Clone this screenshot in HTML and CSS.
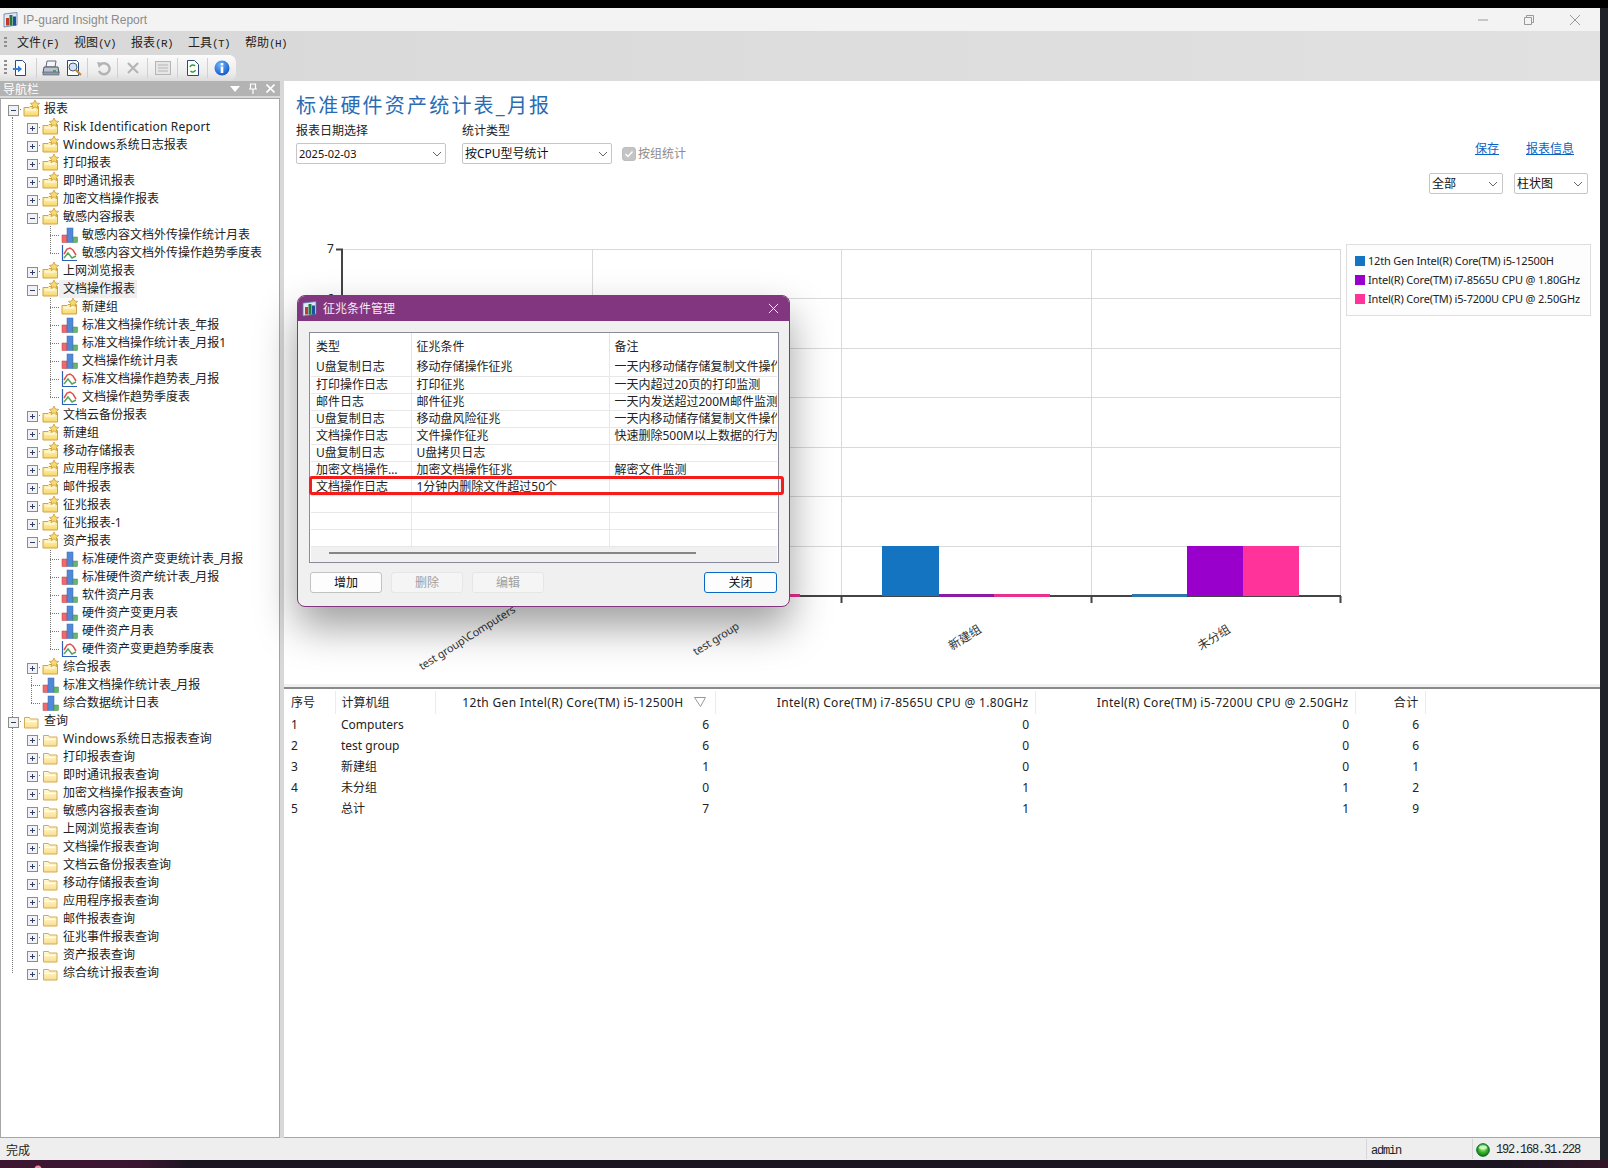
FILE: index.html
```html
<!DOCTYPE html>
<html lang="zh-CN">
<head>
<meta charset="utf-8">
<title>IP-guard Insight Report</title>
<link rel="stylesheet" href="styles.css">
</head>
<body>
<svg class="defs" xmlns="http://www.w3.org/2000/svg">
  <defs>
    <linearGradient id="gold" x1="0" y1="0" x2="0" y2="1"><stop offset="0" stop-color="#fff6c4"/><stop offset="1" stop-color="#f8d766"/></linearGradient>
    <linearGradient id="pale" x1="0" y1="0" x2="0" y2="1"><stop offset="0" stop-color="#fffbe2"/><stop offset="1" stop-color="#f9dd8a"/></linearGradient>
    <radialGradient id="led" cx=".5" cy=".35" r=".7"><stop offset="0" stop-color="#b6f59a"/><stop offset=".6" stop-color="#2aa51f"/><stop offset="1" stop-color="#0b6b0b"/></radialGradient>
    <radialGradient id="info" cx=".4" cy=".3" r=".8"><stop offset="0" stop-color="#6fb6ff"/><stop offset="1" stop-color="#0a4fc0"/></radialGradient>
    <symbol id="fs" viewBox="0 0 17 18">
      <path d="M1 7.500h5l1-1h8.500v9.500H1z" fill="url(#gold)" stroke="#d0a24a"/>
      <path d="M3 9.500h10v1H3z" fill="#fff"/>
      <path d="M12 0l1.500 3 3.200.4-2.400 2.100.7 3.100-3-1.700-3 1.700.7-3.100-2.400-2.100 3.200-.4z" fill="#f7da72" stroke="#bd9236" stroke-width=".7"/>
    </symbol>
    <symbol id="fp" viewBox="0 0 17 18">
      <path d="M1.500 5.500h5l1 1.500h7.500v9H1.500z" fill="url(#pale)" stroke="#d3aa55"/>
      <path d="M3 9h10v1H3z" fill="#fff"/>
    </symbol>
    <symbol id="bar" viewBox="0 0 17 18">
      <rect x="1" y="9" width="5" height="7.500" fill="#ef6a6c" stroke="#bb4144" stroke-width=".5"/>
      <rect x="6" y="2" width="6" height="14.500" fill="#5288d8" stroke="#3a68ad" stroke-width=".5"/>
      <rect x="12" y="11" width="4.500" height="5.500" fill="#68b56c" stroke="#3f8a45" stroke-width=".5"/>
    </symbol>
    <symbol id="line" viewBox="0 0 17 18">
      <path d="M1.500 1v15.500H16" fill="none" stroke="#2c5fb5" stroke-width="1.200"/>
      <path d="M3 10l3-5 3-1 3 2 3 5" fill="none" stroke="#e2504f" stroke-width="1.500"/>
      <path d="M3 14l4-5 4 5 4-2" fill="none" stroke="#55a65a" stroke-width="1.500"/>
    </symbol>
    <symbol id="app" viewBox="0 0 16 16">
      <path d="M1 2l13-1.500V13L1 15z" fill="#dfe8f5" stroke="#5a7aa8" stroke-width=".8"/>
      <rect x="3" y="6" width="3" height="7.500" fill="#c0392b"/>
      <rect x="6.500" y="3" width="3" height="10.500" fill="#1f7a3c"/>
      <rect x="10" y="4.500" width="3" height="9" fill="#1d4f9e"/>
    </symbol>
  </defs>
</svg>

<div class="screen">
  <div class="top-edge"></div>
  <div class="middle">
    <div class="window">
      <header class="titlebar">
        <svg class="app-icon"><use href="#app"/></svg>
        <span class="app-name">IP-guard Insight Report</span>
        <div class="winctl">
          <svg width="12" height="12" viewBox="0 0 12 12"><path d="M1 6h10" stroke="#999"/></svg>
          <svg width="12" height="12" viewBox="0 0 12 12"><path d="M1.500 3.500h7v7h-7zM3.500 3.500v-2h7v7h-2" fill="none" stroke="#999"/></svg>
          <svg width="12" height="12" viewBox="0 0 12 12"><path d="M1 1l10 10M11 1L1 11" stroke="#999"/></svg>
        </div>
      </header>
      <nav class="menubar">
        <i class="grip"></i>
        <span class="menu-item">文件<b>(F)</b></span>
        <span class="menu-item">视图<b>(V)</b></span>
        <span class="menu-item">报表<b>(R)</b></span>
        <span class="menu-item">工具<b>(T)</b></span>
        <span class="menu-item">帮助<b>(H)</b></span>
      </nav>
      <div class="toolband">
        <div class="toolbar">
          <i class="grip"></i>
          <div class="tool first">
            <svg width="16" height="18" viewBox="0 0 16 18"><path d="M3.500 1.500h7l3 3v12h-10z" fill="#fff" stroke="#2b4a78"/><path d="M1 9h5V6.500L10 10l-4 3.500V11H1z" fill="#2f7fd8"/></svg>
          </div>
          <div class="tool double">
            <svg width="18" height="18" viewBox="0 0 18 18"><path d="M5 2h9l-1 6H4z" fill="#f4f6fa" stroke="#667"/><path d="M2 8h14l1 6H1z" fill="#b8c2d0" stroke="#556"/><rect x="1" y="13" width="16" height="3" fill="#8f9aab" stroke="#556" stroke-width=".6"/><rect x="11" y="11" width="3" height="2" fill="#18c02c"/></svg>
            <svg width="18" height="18" viewBox="0 0 18 18"><path d="M2.500 1.500h9l2 2v13h-11z" fill="#fff" stroke="#2b4a78"/><circle cx="8" cy="8" r="4" fill="#cfe4fb" stroke="#556"/><path d="M11 11l5 5" stroke="#c98a2b" stroke-width="2.200"/></svg>
          </div>
          <div class="tool">
            <svg width="16" height="16" viewBox="0 0 16 16"><path d="M5 5a5.500 5.500 0 1 1-1 6" fill="none" stroke="#b3b3b3" stroke-width="2.500"/><path d="M2 2l6 1-4 5z" fill="#b3b3b3"/></svg>
          </div>
          <div class="tool">
            <svg width="14" height="14" viewBox="0 0 14 14"><path d="M2 2l10 10M12 2L2 12" stroke="#b5b5b5" stroke-width="2.200"/></svg>
          </div>
          <div class="tool">
            <svg width="16" height="14" viewBox="0 0 16 14"><rect x=".5" y=".5" width="15" height="13" fill="#e6e6e6" stroke="#b5b5b5"/><path d="M3 4h10M3 7h10M3 10h10" stroke="#b5b5b5"/></svg>
          </div>
          <div class="tool">
            <svg width="14" height="18" viewBox="0 0 14 18"><path d="M1.500 1.500h7l4 4v11h-11z" fill="#fff" stroke="#2b4a78"/><path d="M4 8a3 3 0 0 1 5-1M9.500 11a3 3 0 0 1-5 1" fill="none" stroke="#2fa32f" stroke-width="1.500"/></svg>
          </div>
          <div class="tool last">
            <svg width="16" height="16" viewBox="0 0 16 16"><circle cx="8" cy="8" r="7.500" fill="url(#info)"/><rect x="6.700" y="3" width="2.600" height="2.400" fill="#fff"/><rect x="6.700" y="6.500" width="2.600" height="6.500" fill="#fff"/></svg>
          </div>
        </div>
      </div>

      <div class="workspace">
        <aside class="nav">
          <div class="nav-head">
            <span class="nav-title">导航栏</span>
            <div class="nav-ctl">
              <svg width="10" height="6" viewBox="0 0 10 6"><path d="M0 0h10L5 6z" fill="#fff"/></svg>
              <svg width="10" height="11" viewBox="0 0 10 11"><path d="M2.500 1h5v5h-5zM1 6h8M5 6v5" fill="none" stroke="#fff" stroke-width="1.200"/></svg>
              <svg width="9" height="9" viewBox="0 0 9 9"><path d="M.5.500l8 8M8.500.500l-8 8" stroke="#fff" stroke-width="1.600"/></svg>
            </div>
          </div>
          <div class="tree">
            <div class="row"><i class="g h rb m"></i><svg class="ic"><use href="#fs"/></svg><span>报表</span></div>
            <div class="row"><i class="g v"></i><i class="g h p"></i><svg class="ic"><use href="#fs"/></svg><span class="lat">Risk Identification Report</span></div>
            <div class="row"><i class="g v"></i><i class="g h p"></i><svg class="ic"><use href="#fs"/></svg><span><b class="lat">Windows</b>系统日志报表</span></div>
            <div class="row"><i class="g v"></i><i class="g h p"></i><svg class="ic"><use href="#fs"/></svg><span>打印报表</span></div>
            <div class="row"><i class="g v"></i><i class="g h p"></i><svg class="ic"><use href="#fs"/></svg><span>即时通讯报表</span></div>
            <div class="row"><i class="g v"></i><i class="g h p"></i><svg class="ic"><use href="#fs"/></svg><span>加密文档操作报表</span></div>
            <div class="row"><i class="g v"></i><i class="g h m"></i><svg class="ic"><use href="#fs"/></svg><span>敏感内容报表</span></div>
            <div class="row"><i class="g v"></i><i class="g"></i><i class="g t"></i><svg class="ic"><use href="#bar"/></svg><span>敏感内容文档外传操作统计月表</span></div>
            <div class="row"><i class="g v"></i><i class="g"></i><i class="g l"></i><svg class="ic"><use href="#line"/></svg><span>敏感内容文档外传操作趋势季度表</span></div>
            <div class="row"><i class="g v"></i><i class="g h p"></i><svg class="ic"><use href="#fs"/></svg><span>上网浏览报表</span></div>
            <div class="row"><i class="g v"></i><i class="g h m"></i><svg class="ic"><use href="#fs"/></svg><span class="picked">文档操作报表</span></div>
            <div class="row"><i class="g v"></i><i class="g"></i><i class="g t"></i><svg class="ic"><use href="#fs"/></svg><span>新建组</span></div>
            <div class="row"><i class="g v"></i><i class="g"></i><i class="g t"></i><svg class="ic"><use href="#bar"/></svg><span>标准文档操作统计表_年报</span></div>
            <div class="row"><i class="g v"></i><i class="g"></i><i class="g t"></i><svg class="ic"><use href="#bar"/></svg><span>标准文档操作统计表_月报1</span></div>
            <div class="row"><i class="g v"></i><i class="g"></i><i class="g t"></i><svg class="ic"><use href="#bar"/></svg><span>文档操作统计月表</span></div>
            <div class="row"><i class="g v"></i><i class="g"></i><i class="g t"></i><svg class="ic"><use href="#line"/></svg><span>标准文档操作趋势表_月报</span></div>
            <div class="row"><i class="g v"></i><i class="g"></i><i class="g l"></i><svg class="ic"><use href="#line"/></svg><span>文档操作趋势季度表</span></div>
            <div class="row"><i class="g v"></i><i class="g h p"></i><svg class="ic"><use href="#fs"/></svg><span>文档云备份报表</span></div>
            <div class="row"><i class="g v"></i><i class="g h p"></i><svg class="ic"><use href="#fs"/></svg><span>新建组</span></div>
            <div class="row"><i class="g v"></i><i class="g h p"></i><svg class="ic"><use href="#fs"/></svg><span>移动存储报表</span></div>
            <div class="row"><i class="g v"></i><i class="g h p"></i><svg class="ic"><use href="#fs"/></svg><span>应用程序报表</span></div>
            <div class="row"><i class="g v"></i><i class="g h p"></i><svg class="ic"><use href="#fs"/></svg><span>邮件报表</span></div>
            <div class="row"><i class="g v"></i><i class="g h p"></i><svg class="ic"><use href="#fs"/></svg><span>征兆报表</span></div>
            <div class="row"><i class="g v"></i><i class="g h p"></i><svg class="ic"><use href="#fs"/></svg><span>征兆报表-1</span></div>
            <div class="row"><i class="g v"></i><i class="g h m"></i><svg class="ic"><use href="#fs"/></svg><span>资产报表</span></div>
            <div class="row"><i class="g v"></i><i class="g"></i><i class="g t"></i><svg class="ic"><use href="#bar"/></svg><span>标准硬件资产变更统计表_月报</span></div>
            <div class="row"><i class="g v"></i><i class="g"></i><i class="g t"></i><svg class="ic"><use href="#bar"/></svg><span>标准硬件资产统计表_月报</span></div>
            <div class="row"><i class="g v"></i><i class="g"></i><i class="g t"></i><svg class="ic"><use href="#bar"/></svg><span>软件资产月表</span></div>
            <div class="row"><i class="g v"></i><i class="g"></i><i class="g t"></i><svg class="ic"><use href="#bar"/></svg><span>硬件资产变更月表</span></div>
            <div class="row"><i class="g v"></i><i class="g"></i><i class="g t"></i><svg class="ic"><use href="#bar"/></svg><span>硬件资产月表</span></div>
            <div class="row"><i class="g v"></i><i class="g"></i><i class="g l"></i><svg class="ic"><use href="#line"/></svg><span>硬件资产变更趋势季度表</span></div>
            <div class="row"><i class="g v"></i><i class="g h p"></i><svg class="ic"><use href="#fs"/></svg><span>综合报表</span></div>
            <div class="row"><i class="g v"></i><i class="g t"></i><svg class="ic"><use href="#bar"/></svg><span>标准文档操作统计表_月报</span></div>
            <div class="row"><i class="g v"></i><i class="g l"></i><svg class="ic"><use href="#bar"/></svg><span>综合数据统计日表</span></div>
            <div class="row"><i class="g t m"></i><svg class="ic"><use href="#fp"/></svg><span>查询</span></div>
            <div class="row"><i class="g v"></i><i class="g h p"></i><svg class="ic"><use href="#fp"/></svg><span><b class="lat">Windows</b>系统日志报表查询</span></div>
            <div class="row"><i class="g v"></i><i class="g h p"></i><svg class="ic"><use href="#fp"/></svg><span>打印报表查询</span></div>
            <div class="row"><i class="g v"></i><i class="g h p"></i><svg class="ic"><use href="#fp"/></svg><span>即时通讯报表查询</span></div>
            <div class="row"><i class="g v"></i><i class="g h p"></i><svg class="ic"><use href="#fp"/></svg><span>加密文档操作报表查询</span></div>
            <div class="row"><i class="g v"></i><i class="g h p"></i><svg class="ic"><use href="#fp"/></svg><span>敏感内容报表查询</span></div>
            <div class="row"><i class="g v"></i><i class="g h p"></i><svg class="ic"><use href="#fp"/></svg><span>上网浏览报表查询</span></div>
            <div class="row"><i class="g v"></i><i class="g h p"></i><svg class="ic"><use href="#fp"/></svg><span>文档操作报表查询</span></div>
            <div class="row"><i class="g v"></i><i class="g h p"></i><svg class="ic"><use href="#fp"/></svg><span>文档云备份报表查询</span></div>
            <div class="row"><i class="g v"></i><i class="g h p"></i><svg class="ic"><use href="#fp"/></svg><span>移动存储报表查询</span></div>
            <div class="row"><i class="g v"></i><i class="g h p"></i><svg class="ic"><use href="#fp"/></svg><span>应用程序报表查询</span></div>
            <div class="row"><i class="g v"></i><i class="g h p"></i><svg class="ic"><use href="#fp"/></svg><span>邮件报表查询</span></div>
            <div class="row"><i class="g v"></i><i class="g h p"></i><svg class="ic"><use href="#fp"/></svg><span>征兆事件报表查询</span></div>
            <div class="row"><i class="g v"></i><i class="g h p"></i><svg class="ic"><use href="#fp"/></svg><span>资产报表查询</span></div>
            <div class="row"><i class="g vh"></i><i class="g h p"></i><svg class="ic"><use href="#fp"/></svg><span>综合统计报表查询</span></div>
          </div>
        </aside>

        <main class="report">
          <section class="report-head">
            <div class="filters">
              <h1 class="report-title">标准硬件资产统计表_月报</h1>
              <div class="filter-row">
                <div class="field">
                  <label class="field-label">报表日期选择</label>
                  <div class="select wide"><span class="date">2025-02-03</span><svg class="chev" viewBox="0 0 10 6"><path d="M1 1l4 4 4-4" fill="none" stroke="#666"/></svg></div>
                </div>
                <div class="field">
                  <label class="field-label">统计类型</label>
                  <div class="select wide"><span>按CPU型号统计</span><svg class="chev" viewBox="0 0 10 6"><path d="M1 1l4 4 4-4" fill="none" stroke="#666"/></svg></div>
                </div>
                <div class="checkline">
                  <svg width="14" height="14" viewBox="0 0 14 14"><rect width="13" height="13" x=".5" y=".5" rx="2.500" fill="#c4c4c4" stroke="#bdbdbd"/><path d="M3.500 7l2.500 2.500 4.500-5" fill="none" stroke="#fff" stroke-width="1.400"/></svg>
                  <span>按组统计</span>
                </div>
              </div>
            </div>
            <div class="head-right">
              <div class="links"><a class="link">保存</a><a class="link">报表信息</a></div>
              <div class="view-selects">
                <div class="select narrow"><span>全部</span><svg class="chev" viewBox="0 0 10 6"><path d="M1 1l4 4 4-4" fill="none" stroke="#666"/></svg></div>
                <div class="select narrow"><span>柱状图</span><svg class="chev" viewBox="0 0 10 6"><path d="M1 1l4 4 4-4" fill="none" stroke="#666"/></svg></div>
              </div>
            </div>
          </section>

          <section class="chart-row">
            <svg class="chart" viewBox="284 235 1062 452" width="1062" height="452">
              <g stroke="#d9d9d9" stroke-width="1">
                <path d="M342 249.500H1340M342 298.500H1340M342 348.500H1340M342 397.500H1340M342 447.500H1340M342 496.500H1340M342 546.500H1340"/>
                <path d="M592.500 249V596M841.500 249V596M1091.500 249V596M1340.500 249V596"/>
              </g>
              <path d="M336 249.500h6V596H1341M342 596v7M592.500 596v7M841.500 596v7M1091.500 596v7M1340.500 596v7" fill="none" stroke="#444" stroke-width="2"/>
              <rect x="383" y="299" width="56" height="297" fill="#1474c2"/>
              <rect x="633" y="299" width="56" height="297" fill="#1474c2"/>
              <rect x="689" y="594" width="55" height="3" fill="#8a1aa8"/>
              <rect x="744" y="594" width="56" height="3" fill="#e8308f"/>
              <rect x="882" y="546" width="57" height="50" fill="#1474c2"/>
              <rect x="939" y="594" width="55" height="3" fill="#8a1aa8"/>
              <rect x="994" y="594" width="56" height="3" fill="#e8308f"/>
              <rect x="1132" y="594" width="55" height="3" fill="#2f76ab"/>
              <rect x="1187" y="546" width="56" height="50" fill="#9900cc"/>
              <rect x="1243" y="546" width="56" height="50" fill="#ff3399"/>
              <text class="tick" x="327" y="253">7</text>
              <text class="tick" x="327" y="303">6</text>
              <text class="xlabel lat-label" transform="translate(469 641) rotate(-32)">test group\Computers</text>
              <text class="xlabel lat-label" transform="translate(718 642) rotate(-32)">test group</text>
              <text class="xlabel" transform="translate(967 641) rotate(-32)">新建组</text>
              <text class="xlabel" transform="translate(1216 641) rotate(-32)">未分组</text>
            </svg>
            <div class="legend">
              <div class="legend-item"><i class="sw sw-blue"></i>12th Gen Intel(R) Core(TM) i5-12500H</div>
              <div class="legend-item"><i class="sw sw-purple"></i>Intel(R) Core(TM) i7-8565U CPU @ 1.80GHz</div>
              <div class="legend-item"><i class="sw sw-pink"></i>Intel(R) Core(TM) i5-7200U CPU @ 2.50GHz</div>
            </div>
          </section>

          <section class="data">
            <table class="grid">
              <colgroup><col class="c1"><col class="c2"><col class="c3"><col class="c4"><col class="c4"><col class="c5"></colgroup>
              <thead>
                <tr><th>序号</th><th>计算机组</th><th class="num sorted">12th Gen Intel(R) Core(TM) i5-12500H<svg class="sort" viewBox="0 0 12 10"><path d="M.5.500h11L6.500 9.500z" fill="none" stroke="#999"/></svg></th><th class="num">Intel(R) Core(TM) i7-8565U CPU @ 1.80GHz</th><th class="num">Intel(R) Core(TM) i5-7200U CPU @ 2.50GHz</th><th class="num">合计</th></tr>
              </thead>
              <tbody>
                <tr><td>1</td><td>Computers</td><td class="num">6</td><td class="num">0</td><td class="num">0</td><td class="num">6</td></tr>
                <tr><td>2</td><td>test group</td><td class="num">6</td><td class="num">0</td><td class="num">0</td><td class="num">6</td></tr>
                <tr><td>3</td><td>新建组</td><td class="num">1</td><td class="num">0</td><td class="num">0</td><td class="num">1</td></tr>
                <tr><td>4</td><td>未分组</td><td class="num">0</td><td class="num">1</td><td class="num">1</td><td class="num">2</td></tr>
                <tr><td>5</td><td>总计</td><td class="num">7</td><td class="num">1</td><td class="num">1</td><td class="num">9</td></tr>
              </tbody>
            </table>
          </section>
        </main>
      </div>

      <footer class="statusbar">
        <span class="status-main">完成</span>
        <span class="status-user">admin</span>
        <span class="status-ip">
          <svg width="14" height="14" viewBox="0 0 14 14"><circle cx="7" cy="7" r="6.300" fill="url(#led)" stroke="#063" stroke-width="1"/><ellipse cx="7" cy="4.500" rx="4" ry="2" fill="#d8ffc8" opacity=".8"/></svg>
          192.168.31.228
        </span>
      </footer>
    </div>
    <div class="right-edge"></div>
  </div>
  <div class="bottom-edge"></div>
</div>

<div class="dialog">
  <div class="dialog-title">
    <svg class="dialog-icon"><use href="#app"/></svg>
    <span>征兆条件管理</span>
    <svg class="dialog-close" viewBox="0 0 12 12"><path d="M1 1l10 10M11 1L1 11" stroke="#fff" stroke-width="1"/></svg>
  </div>
  <div class="dialog-body">
    <div class="listbox">
      <table class="list">
        <colgroup><col class="l1"><col class="l2"><col class="l3"></colgroup>
        <thead><tr><th>类型</th><th>征兆条件</th><th>备注</th></tr></thead>
        <tbody>
          <tr><td>U盘复制日志</td><td>移动存储操作征兆</td><td>一天内移动储存储复制文件操作超过100个</td></tr>
          <tr><td>打印操作日志</td><td>打印征兆</td><td>一天内超过20页的打印监测</td></tr>
          <tr><td>邮件日志</td><td>邮件征兆</td><td>一天内发送超过200M邮件监测</td></tr>
          <tr><td>U盘复制日志</td><td>移动盘风险征兆</td><td>一天内移动储存储复制文件操作超过100个</td></tr>
          <tr><td>文档操作日志</td><td>文件操作征兆</td><td>快速删除500M以上数据的行为监测</td></tr>
          <tr><td>U盘复制日志</td><td>U盘拷贝日志</td><td></td></tr>
          <tr><td>加密文档操作日志</td><td>加密文档操作征兆</td><td>解密文件监测</td></tr>
          <tr><td>文档操作日志</td><td>1分钟内删除文件超过50个</td><td></td></tr>
          <tr><td></td><td></td><td></td></tr>
          <tr><td></td><td></td><td></td></tr>
          <tr><td></td><td></td><td></td></tr>
        </tbody>
      </table>
      <div class="hscroll"><i class="thumb"></i></div>
    </div>
    <div class="dialog-actions">
      <button class="btn">增加</button>
      <button class="btn off">删除</button>
      <button class="btn off">编辑</button>
      <button class="btn primary">关闭</button>
    </div>
  </div>
  <div class="highlight"></div>
</div>
</body>
</html>
```
FILE: styles.css
```css
* { box-sizing: border-box; }
html, body { margin: 0; padding: 0; }
body {
  width: 1608px;
  height: 1168px;
  overflow: hidden;
  position: relative;
  background: #000;
  font: 12px/16px "Noto Sans", "Noto Sans CJK SC", sans-serif;
  color: #1c1c1c;
}
.defs { display: block; width: 0; height: 0; }

.screen { display: flex; flex-direction: column; height: 1168px; }
.top-edge { height: 8px; background: #000; flex: none; }
.middle { display: flex; height: 1152px; flex: none; }
.right-edge { width: 8px; background: #1f2229; flex: none; }
.bottom-edge {
  height: 8px;
  flex: none;
  background:
    radial-gradient(circle at 38px 9px, #f08aa0 0 3px, transparent 4px),
    linear-gradient(90deg, #3d1732 0, #3a1530 140px, #1a1520 190px, #1a1520 1500px, #321628 1608px);
}
.window { width: 1600px; display: flex; flex-direction: column; background: #dcdcdc; }

.titlebar { height: 23px; flex: none; background: #f3f3f3; display: flex; align-items: center; padding-left: 3px; }
.app-icon { width: 16px; height: 16px; }
.app-name { margin-left: 4px; font: 12px/16px "Liberation Sans", sans-serif; color: #8b8b8b; }
.winctl { margin-left: auto; display: flex; gap: 34px; padding-right: 19px; align-items: center; }

.menubar { height: 24px; flex: none; display: flex; align-items: center; background: linear-gradient(90deg, #d8d8d8, #e1e1e1); padding-left: 4px; }
.grip { width: 3px; height: 12px; flex: none; background: repeating-linear-gradient(#8f8f8f 0 2px, transparent 2px 4px); }
.menu-item { width: 57px; flex: none; color: #222; }
.menubar .grip + .menu-item { margin-left: 10px; }
.menu-item b { font: 11px/16px "Liberation Mono", monospace; letter-spacing: -.6px; }

.toolband { height: 26px; flex: none; background: linear-gradient(90deg, #d8d8d8, #e1e1e1); }
.toolbar { width: 236px; height: 26px; display: flex; align-items: center; padding-left: 4px; border-radius: 0 7px 7px 0; background: linear-gradient(#fbfbfb, #ececec 70%, #dcdcdc); }
.toolbar .grip { height: 16px; }
.tool { height: 20px; width: 30px; flex: none; display: flex; align-items: center; justify-content: center; border-right: 1px solid #d0d0d0; }
.tool.first { width: 30px; padding-right: 4px; }
.tool.double { width: 51px; gap: 5px; }
.tool.last { border-right: 0; width: 28px; }

.workspace { flex: 1; min-height: 0; display: flex; gap: 4px; background: #d8d8d8; }
.nav { width: 280px; flex: none; display: flex; flex-direction: column; }
.nav-head { height: 15px; flex: none; background: #b3b3b3; display: flex; align-items: center; justify-content: space-between; padding: 0 5px 0 3px; margin-bottom: 2px; }
.nav-title { color: #fff; font-size: 12px; line-height: 15px; margin-top: 2px; }
.nav-ctl { display: flex; align-items: center; gap: 8px; }
.tree { flex: 1; background: #fff; border: 1px solid #a6a6a6; padding: 1px 0 0 2px; overflow: hidden; }

.row {
  --dv: repeating-linear-gradient(#777 0 1px, transparent 1px 2px);
  --dh: repeating-linear-gradient(90deg, #777 0 1px, transparent 1px 2px);
  height: 18px;
  display: flex;
  align-items: center;
  line-height: 18px;
  white-space: nowrap;
  color: #222;
}
.g { display: block; width: 19px; height: 18px; flex: none; }
.v { background: var(--dv) 9px 0 / 1px 18px no-repeat; }
.vh { background: var(--dv) 9px 0 / 1px 9px no-repeat; }
.h { background: var(--dh) 9px 9px / 10px 1px no-repeat; }
.rb { background: var(--dh) 9px 9px / 10px 1px no-repeat, var(--dv) 9px 9px / 1px 9px no-repeat; }
.t { background: var(--dv) 9px 0 / 1px 18px no-repeat, var(--dh) 9px 9px / 10px 1px no-repeat; }
.l { background: var(--dv) 9px 0 / 1px 9px no-repeat, var(--dh) 9px 9px / 10px 1px no-repeat; }
.p::before, .m::before {
  content: "";
  display: block;
  width: 9px;
  height: 9px;
  margin: 5px 0 0 5px;
  border: 1px solid #8c8c8c;
  background-color: #f2f2f2;
  background-repeat: no-repeat;
  background-image: linear-gradient(#2f3f66, #2f3f66);
  background-size: 5px 1px;
  background-position: center;
}
.p::before {
  background-image: linear-gradient(#2f3f66, #2f3f66), linear-gradient(#2f3f66, #2f3f66);
  background-size: 5px 1px, 1px 5px;
}
.ic { width: 17px; height: 18px; flex: none; margin: 0 0 0 1px; }
.row span { padding: 0 2px 0 3px; margin-left: 1px; }
.row span.picked { background: #f0f0f0; margin-left: 0; padding-left: 4px; }
.row .lat { letter-spacing: .2px; font-weight: 400; }

.report { flex: 1; min-width: 0; background: #fff; border-bottom: 1px solid #a6a6a6; display: flex; flex-direction: column; }
.report-head { height: 154px; flex: none; display: flex; justify-content: space-between; padding: 0 12px; }
.report-title { margin: 13px 0 0; font-size: 20px; line-height: 24px; font-weight: 400; letter-spacing: 2.200px; color: #2a6cb3; }
.filter-row { display: flex; align-items: flex-end; gap: 16px; margin-top: 5px; }
.field { display: flex; flex-direction: column; gap: 4px; }
.field-label { line-height: 16px; color: #222; }
.select { height: 21px; background: #fff; border: 1px solid #c6c6c6; border-radius: 2px; display: flex; align-items: center; justify-content: space-between; padding: 0 3px 0 2px; line-height: 18px; color: #111; }
.select.wide { width: 150px; }
.select.narrow { width: 74px; padding-right: 4px; }
.date { font-size: 11px; }
.chev { width: 10px; height: 6px; flex: none; }
.checkline { display: flex; align-items: center; gap: 2px; height: 21px; margin-left: -6px; color: #8c8c8c; }
.head-right { display: flex; flex-direction: column; width: 159px; padding-top: 60px; }
.links { display: flex; justify-content: flex-end; gap: 27px; padding-right: 14px; height: 16px; }
.link { color: #0a63c4; text-decoration: underline; white-space: nowrap; }
.view-selects { display: flex; justify-content: space-between; margin-top: 16px; }

.chart-row { height: 452px; flex: none; display: flex; align-items: flex-start; }
.chart { display: block; flex: none; }
.tick { font-size: 12px; fill: #222; }
.xlabel { font-size: 12px; fill: #333; text-anchor: middle; }
.lat-label { font-size: 11px; letter-spacing: -.2px; }
.legend { width: 245px; height: 72px; margin-top: 9px; flex: none; background: #fdfdfd; border: 1px solid #dedede; padding: 8px 0 0 8px; display: flex; flex-direction: column; gap: 3px; }
.legend-item { height: 16px; display: flex; align-items: center; gap: 3px; font-size: 11px; line-height: 16px; letter-spacing: -.17px; white-space: nowrap; color: #222; }
.sw { width: 10px; height: 10px; flex: none; }
.sw-blue { background: #1474c2; }
.sw-purple { background: #9900cc; }
.sw-pink { background: #ff3399; }

.data { flex: 1; min-height: 0; border-top: 2px solid #8a8a8a; box-shadow: 0 -3px 0 #f0f0f0; padding: 2px 0 0 1px; background: #fff; }
.grid { border-collapse: collapse; table-layout: fixed; width: 1140px; }
.c1 { width: 50px; }
.c2 { width: 100px; }
.c3 { width: 280px; }
.c4 { width: 320px; }
.c5 { width: 70px; }
.grid th { height: 23px; font-weight: 400; text-align: left; padding: 0 6px; border-right: 1px solid #ececec; white-space: nowrap; position: relative; color: #222; }
.grid th.num { letter-spacing: .33px; }
.grid td { height: 21px; padding: 0 6px; white-space: nowrap; color: #222; }
.grid .num { text-align: right; }
.grid th.sorted { padding-right: 31px; }
.sort { width: 12px; height: 10px; position: absolute; right: 9px; top: 6px; }

.dialog { position: absolute; left: 297px; top: 295px; width: 493px; height: 312px; border: 1px solid #82367f; border-radius: 8px; background: #f0f0f0; box-shadow: 0 20px 40px rgba(0, 0, 0, .38); overflow: visible; }
.dialog-title { height: 25px; background: #82367f; border-radius: 7px 7px 0 0; display: flex; align-items: center; padding-left: 4px; color: #f4eaf4; font-size: 12px; }
.dialog-icon { width: 16px; height: 16px; margin-right: 5px; }
.dialog-close { width: 11px; height: 11px; margin-left: auto; margin-right: 10px; }
.dialog-body { padding: 11px 10px 0 11px; }
.listbox { width: 470px; height: 231px; border: 1px solid #8a8a9a; background: #fff; padding: 0 1px; overflow: hidden; }
.list { border-collapse: collapse; table-layout: fixed; width: 466px; }
.l1 { width: 100px; }
.l2 { width: 198px; }
.l3 { width: 168px; }
.list th { height: 26px; padding: 1px 5px 0; font-weight: 400; text-align: left; border-right: 1px solid #e4e4e4; color: #222; }
.list th:last-child, .list td:last-child { border-right: 0; }
.list td { height: 17px; line-height: 16px; padding: 0 5px; border-right: 1px solid #e8e8e8; border-bottom: 1px solid #e8e8e8; white-space: nowrap; overflow: hidden; color: #222; }
.list td:first-child { text-overflow: ellipsis; }
.list td:last-child { text-overflow: clip; }
.hscroll { height: 16px; background: #f0f0f0; padding: 5px 0 0 18px; }
.thumb { display: block; width: 367px; height: 2px; background: #858585; }
.dialog-actions { display: flex; gap: 9px; margin-top: 9px; padding: 0 2px 0 1px; }
.btn { width: 72px; height: 21px; padding: 0; font: 12px/16px "Noto Sans", "Noto Sans CJK SC", sans-serif; color: #111; background: #fdfdfd; border: 1px solid #c2c2c2; border-radius: 3px; }
.btn.off { background: #f5f5f5; border-color: #e6e6e6; color: #a0a0a0; }
.btn.primary { margin-left: auto; width: 73px; border-color: #0a68c4; }
.highlight { position: absolute; left: 11px; top: 180px; width: 475px; height: 19px; border: 3px solid #f51c1c; border-radius: 3px; }

.statusbar { height: 22px; flex: none; background: #eeeeee; display: flex; align-items: stretch; line-height: 22px; }
.status-main { width: 1366px; padding: 2px 0 0 6px; }
.status-user, .status-ip { font: 12px/20px "Liberation Mono", monospace; letter-spacing: -1.200px; border-left: 1px solid #d6d6d6; margin: 1px 0; color: #222; }
.status-user { width: 106px; padding: 2px 0 0 4px; }
.status-ip { flex: 1; display: flex; align-items: center; gap: 6px; padding: 1px 0 0 3px; }
```
